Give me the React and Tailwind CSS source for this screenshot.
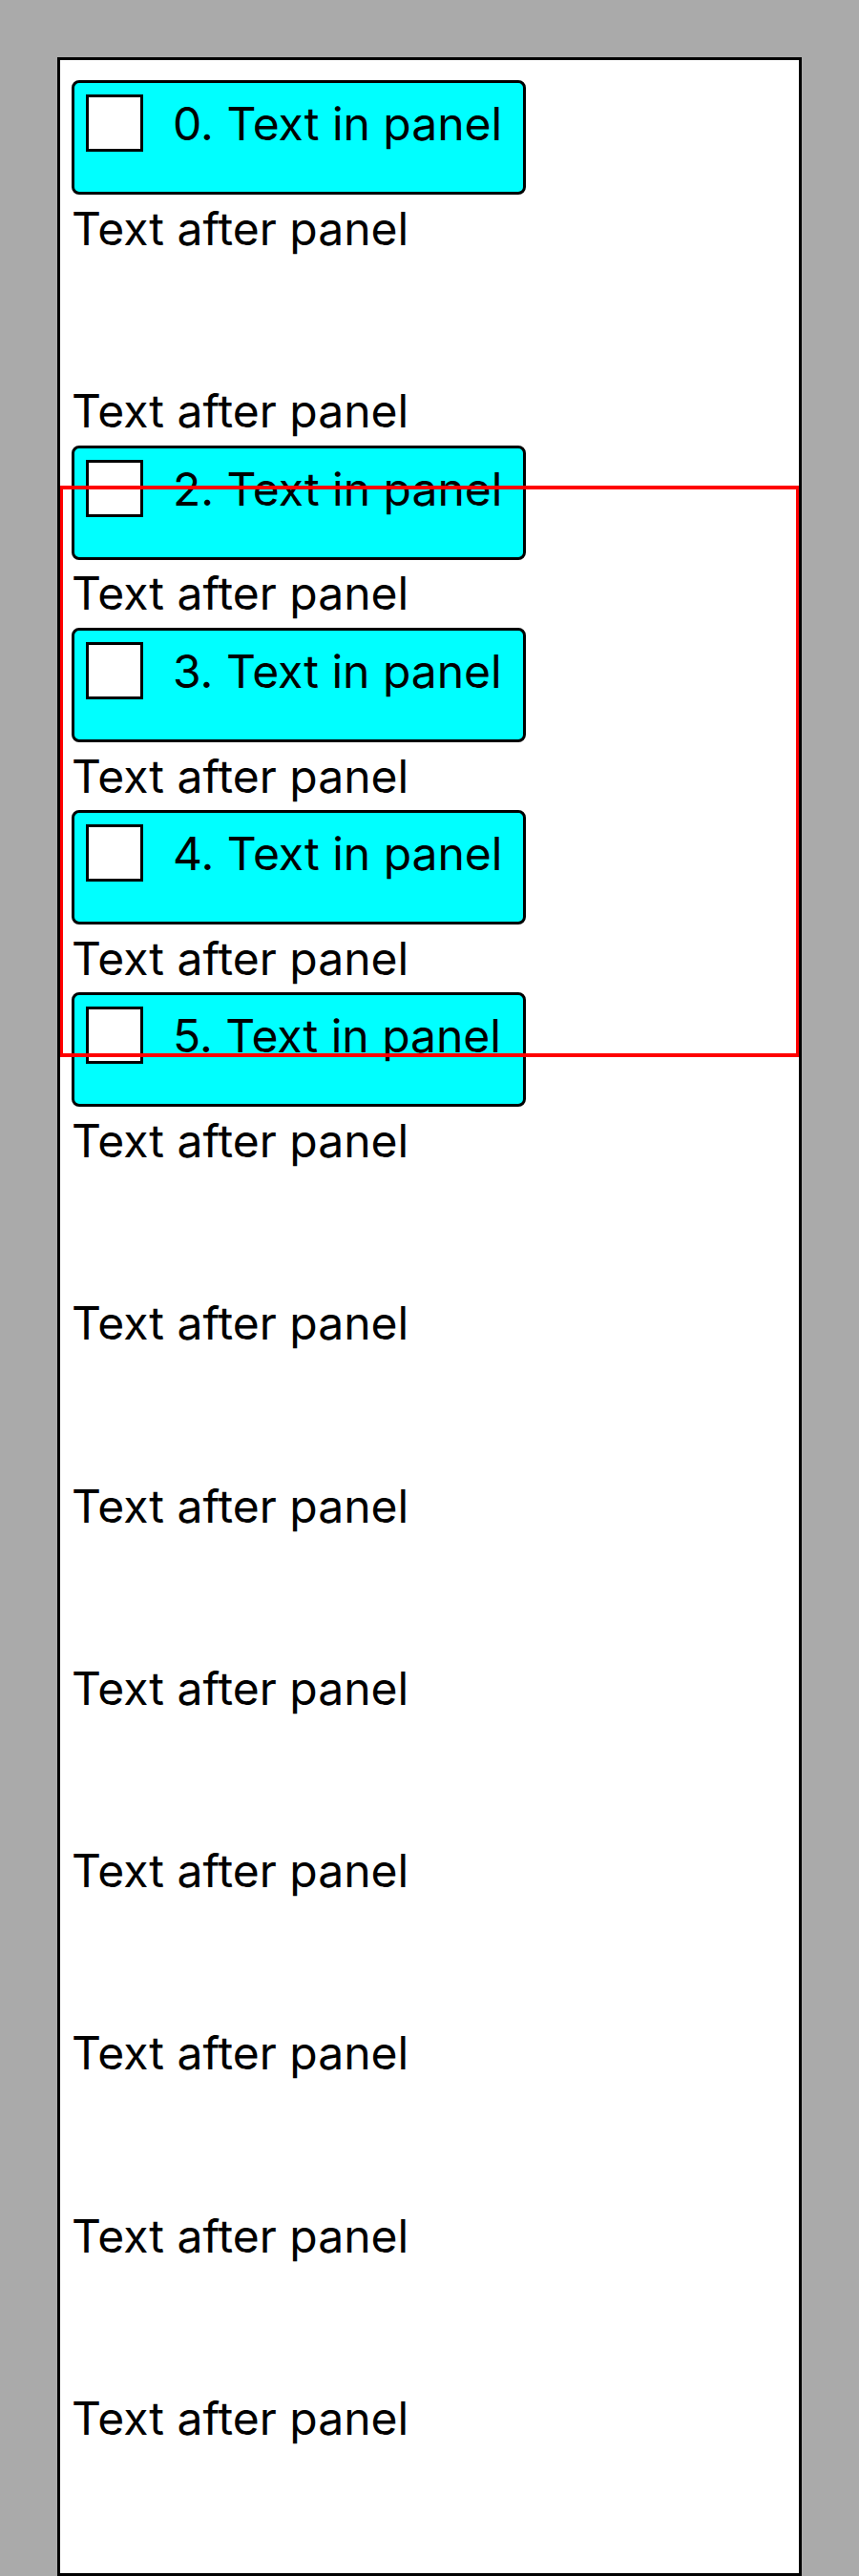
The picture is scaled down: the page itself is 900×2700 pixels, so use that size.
import React from "react";

const items = Array.from({ length: 15 }, (_, i) => i);
const shown = [0, 2, 3, 4, 5];

function Panel({ index }) {
  const visible = shown.includes(index);
  return (
    <div
      className={`${visible ? "" : "invisible"} mt-[9px] flex h-[120px] w-[476px] items-start rounded-lg border-3 border-black bg-[#00ffff] p-3`}
    >
      <div className="h-[60px] w-[60px] shrink-0 border-3 border-black bg-white" />
      <span className="ml-[31px] leading-[61px] whitespace-nowrap">{index}. Text in panel</span>
    </div>
  );
}

export default function App() {
  return (
    <div className="min-h-[2700px] bg-[#aaaaaa] pl-[60px] pt-[60px] text-[48px] text-black font-['Inter',sans-serif]">
      <div className="relative h-[2640px] w-[780px] overflow-hidden border-3 border-black bg-white p-3">
        {items.map((i) => (
          <div key={i}>
            <Panel index={i} />
            <div className="mt-[8.85px] leading-[53.4px]">Text after panel</div>
          </div>
        ))}
        {/* highlight box */}
        <div className="absolute inset-x-0 top-[446px] h-[599px] border-x-3 border-y-4 border-[#ff0000]" />
      </div>
    </div>
  );
}
